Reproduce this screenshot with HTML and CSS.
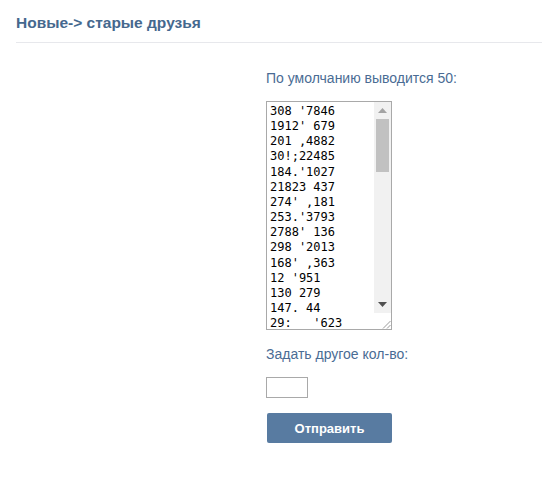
FILE: index.html
```html
<!DOCTYPE html>
<html lang="ru">
<head>
<meta charset="utf-8">
<link rel="stylesheet" href="styles.css">
</head>
<body>
<div class="page">
  <h1 class="title">Новые-&gt; старые друзья</h1>
  <div class="form">
    <div class="label">По умолчанию выводится 50:</div>
    <div class="area">
      <div class="area-text">308 '7846
1912' 679
201 ,4882
30!;22485
184.'1027
21823 437
274' ,181
253.'3793
2788' 136
298 '2013
168' ,363
12 '951
130 279
147. 44
29:   '623</div>
      <div class="sbar">
        <div class="sbar-btn"><svg width="9" height="5" viewBox="0 0 9 5"><path d="M0 5 L4.5 0 L9 5 Z" fill="#a3a3a3"/></svg></div>
        <div class="sbar-track"><div class="sbar-thumb"></div></div>
        <div class="sbar-btn"><svg width="9" height="5" viewBox="0 0 9 5"><path d="M0 0 L9 0 L4.5 5 Z" fill="#505050"/></svg></div>
        <div class="sbar-corner"><svg width="9" height="9" viewBox="0 0 9 9"><path d="M8.5 1 L1 8.5 M8.5 5 L5 8.5" stroke="#9a9a9a" stroke-width="1"/></svg></div>
      </div>
    </div>
    <div class="label label2">Задать другое кол-во:</div>
    <div class="count"></div>
    <button class="send">Отправить</button>
  </div>
</div>
</body>
</html>
```
FILE: styles.css
```css
html, body {
  margin: 0;
  padding: 0;
  background: #fff;
}
.page {
  padding: 0 0 0 16px;
  font-family: "Liberation Sans", Arial, sans-serif;
}
.title {
  margin: 0;
  padding: 14px 0 10px;
  font-size: 15.5px;
  line-height: 18px;
  font-weight: bold;
  color: #45688e;
  border-bottom: 1px solid #e7e8ec;
}
.form {
  padding-left: 250px;
  display: flex;
  flex-direction: column;
  align-items: flex-start;
}
.label {
  margin-top: 27px;
  font-size: 14px;
  line-height: 16px;
  color: #4a6c94;
}
.area {
  margin-top: 15px;
  width: 124px;
  height: 227px;
  border: 1px solid #a9a9a9;
  display: flex;
  overflow: hidden;
}
.area-text {
  flex: 1;
  padding: 2px 0 0 3px;
  font-family: "DejaVu Sans Mono", monospace;
  font-size: 12px;
  line-height: 15.15px;
  white-space: pre;
  color: #000;
  overflow: hidden;
}
.sbar {
  width: 17px;
  display: flex;
  flex-direction: column;
  background: #f1f1f1;
}
.sbar-btn {
  height: 17px;
  display: flex;
  align-items: center;
  justify-content: center;
}
.sbar-track {
  flex: 1;
  padding: 0 2px;
}
.sbar-thumb {
  height: 53px;
  background: #c1c1c1;
}
.sbar-corner {
  height: 16px;
  background: #fff;
  display: flex;
  align-items: flex-end;
  justify-content: flex-end;
}
.label2 {
  margin-top: 16px;
}
.count {
  margin-top: 15px;
  width: 40px;
  height: 19px;
  border: 1px solid #a9a9a9;
}
.send {
  margin-top: 15px;
  margin-left: 1px;
  width: 125px;
  height: 30px;
  border: none;
  border-radius: 2px;
  background: #587ba1;
  color: #fff;
  font-family: "Liberation Sans", Arial, sans-serif;
  font-weight: bold;
  font-size: 13px;
  padding: 0;
}
```
